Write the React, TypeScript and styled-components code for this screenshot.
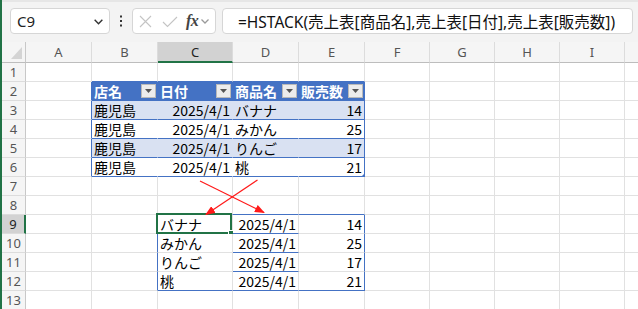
import React from "react";
import styled, { createGlobalStyle, css } from "styled-components";

const GlobalStyle = createGlobalStyle`
  html, body {
    margin: 0;
    padding: 0;
    background: #ffffff;
  }
  body {
    font-family: "Noto Sans CJK JP", "Noto Sans", sans-serif;
  }
`;

const GREEN = "#217346";
const BLUE = "#4472c4";
const GRID = "#e1e1e1";
const BAND = "#d9e1f2";

const Sheet = styled.div`
  position: relative;
  width: 638px;
  height: 309px;
  overflow: hidden;
  border-left: 2px solid ${GREEN};
  box-sizing: border-box;
  display: flex;
  flex-direction: column;
`;

const FormulaBar = styled.div`
  height: 42px;
  flex: none;
  box-sizing: border-box;
  background: #f3f3f3;
  border-top: 2px solid #e6e6e6;
  padding: 6px 5px 0 8px;
  display: flex;
  align-items: flex-start;
`;

const Box = styled.div<{ $width?: number; $grow?: boolean }>`
  height: 26px;
  box-sizing: border-box;
  background: #ffffff;
  border: 1px solid #d6d6d6;
  border-radius: 4px;
  display: flex;
  align-items: center;
  ${(p) => (p.$grow ? css`flex: 1; margin-left: 6px;` : css`width: ${p.$width}px; flex: none;`)}
`;

const NameText = styled.span`
  font-family: "Noto Sans", sans-serif;
  font-size: 15px;
  color: #222;
  padding-left: 6px;
  flex: 1;
`;

const IconSlot = styled.span<{ $gap?: number }>`
  display: flex;
  margin-left: ${(p) => p.$gap || 0}px;
  margin-right: ${(p) => (p.$gap ? 0 : 5)}px;
`;

const Dots = styled.div`
  width: 22px;
  height: 26px;
  display: flex;
  align-items: center;
  justify-content: center;
  flex: none;
`;

const FxGroup = styled.div`
  display: flex;
  align-items: center;
  padding-left: 6px;
`;

const FxText = styled.span`
  font-family: "Liberation Serif", serif;
  font-style: italic;
  font-weight: bold;
  font-size: 16px;
  color: #444;
  margin-left: 8px;
  letter-spacing: -0.5px;
`;

const Formula = styled.span`
  font-family: "Noto Sans", "Noto Sans CJK JP", sans-serif;
  font-size: 15.5px;
  color: #111;
  padding-left: 15px;
  white-space: nowrap;
`;

const Grid = styled.div`
  display: grid;
  grid-template-columns: 24px 66px 66px 75px 66px 66px 65px 65px 65px 65px 40px;
  grid-template-rows: 21px repeat(13, 19px);
`;

const Corner = styled.div`
  background: #f5f5f5;
  border-right: 1px solid #c8c8c8;
  border-bottom: 1px solid #bdbdbd;
  box-sizing: border-box;
  display: flex;
  align-items: flex-end;
  justify-content: flex-end;
  padding: 0 3px 3px 0;
`;

const ColHead = styled.div<{ $active?: boolean }>`
  box-sizing: border-box;
  background: ${(p) => (p.$active ? "#d2d2d2" : "#f5f5f5")};
  border-right: 1px solid #dcdcdc;
  border-bottom: ${(p) => (p.$active ? `2px solid ${GREEN}` : "1px solid #bdbdbd")};
  font-family: "Noto Sans", sans-serif;
  font-size: 13px;
  color: ${(p) => (p.$active ? "#222" : "#555")};
  display: flex;
  align-items: center;
  justify-content: center;
  overflow: hidden;
`;

const RowHead = styled.div<{ $active?: boolean }>`
  box-sizing: border-box;
  background: ${(p) => (p.$active ? "#d2d2d2" : "#f5f5f5")};
  border-right: ${(p) => (p.$active ? `2px solid ${GREEN}` : "1px solid #c8c8c8")};
  border-bottom: 1px solid #dcdcdc;
  font-family: "Noto Sans", sans-serif;
  font-size: 13px;
  color: ${(p) => (p.$active ? "#222" : "#555")};
  display: flex;
  align-items: center;
  justify-content: center;
`;

type CellProps = {
  $bg?: string;
  $right?: string;
  $bottom?: string;
  $align?: "left" | "right";
  $head?: boolean;
  $corner?: boolean;
};

const Cell = styled.div<CellProps>`
  position: relative;
  box-sizing: border-box;
  background: ${(p) => p.$bg || "#ffffff"};
  border-right: 1px solid ${(p) => p.$right || GRID};
  border-bottom: 1px solid ${(p) => p.$bottom || GRID};
  font-size: 14px;
  line-height: 18px;
  color: ${(p) => (p.$head ? "#ffffff" : "#000000")};
  font-weight: ${(p) => (p.$head ? 700 : 400)};
  padding: 0 2px;
  white-space: nowrap;
  display: flex;
  align-items: center;
  justify-content: ${(p) => (p.$align === "right" ? "flex-end" : "space-between")};
  ${(p) =>
    p.$corner &&
    css`
      &::after {
        content: "";
        position: absolute;
        right: -1px;
        bottom: -1px;
        border-left: 4px solid transparent;
        border-bottom: 4px solid ${BLUE};
      }
    `}
`;

const FilterButton = styled.span`
  width: 15px;
  height: 14px;
  box-sizing: border-box;
  background: #ececec;
  border: 1px solid #b9b9b9;
  display: flex;
  align-items: center;
  justify-content: center;
  margin-right: -1px;
  flex: none;
`;

const Selection = styled.div`
  position: absolute;
  left: -2px;
  top: -2px;
  width: 76px;
  height: 21px;
  box-sizing: border-box;
  border: 2px solid ${GREEN};
  pointer-events: none;
`;

const FillHandle = styled.div`
  position: absolute;
  left: 70px;
  top: 15px;
  width: 7px;
  height: 7px;
  box-sizing: border-box;
  background: ${GREEN};
  border: 1px solid #ffffff;
`;

const Overlay = styled.svg`
  position: absolute;
  left: -2px;
  top: 0;
  pointer-events: none;
`;

const Chevron = ({ color, size }: { color: string; size: number }) => (
  <svg width={size} height={size} viewBox="0 0 10 10">
    <path d="M1.5 3.5 L5 7 L8.5 3.5" fill="none" stroke={color} strokeWidth="1.3" />
  </svg>
);

// J is only partly on screen, its letter falls past the edge
const columns = ["A", "B", "C", "D", "E", "F", "G", "H", "I", ""];

const source: string[][] = [
  ["鹿児島", "2025/4/1", "バナナ", "14"],
  ["鹿児島", "2025/4/1", "みかん", "25"],
  ["鹿児島", "2025/4/1", "りんご", "17"],
  ["鹿児島", "2025/4/1", "桃", "21"],
];

const spill: string[][] = [
  ["バナナ", "2025/4/1", "14"],
  ["みかん", "2025/4/1", "25"],
  ["りんご", "2025/4/1", "17"],
  ["桃", "2025/4/1", "21"],
];

const tableHeads = ["店名", "日付", "商品名", "販売数"];

// c: 0 = A ... 9 = J
function cellFor(r: number, c: number) {
  const props: CellProps = {};
  let text = "";
  let filter = false;

  // source table B2:E6
  if (c === 0 && r >= 2 && r <= 6) props.$right = BLUE;
  if (r === 1 && c >= 1 && c <= 4) props.$bottom = BLUE;
  if (r >= 2 && r <= 6 && c >= 1 && c <= 4) {
    props.$bottom = BLUE;
    props.$right = c === 4 ? BLUE : r === 2 ? BLUE : r % 2 === 1 ? BAND : "#ffffff";
    if (r === 2) {
      props.$bg = BLUE;
      props.$head = true;
      text = tableHeads[c - 1];
      filter = true;
    } else {
      props.$bg = r % 2 === 1 ? BAND : "#ffffff";
      text = source[r - 3][c - 1];
      if (c === 2 || c === 4) props.$align = "right";
      if (r === 6 && c === 4) props.$corner = true;
    }
  }

  // spilled range C9:E12
  if (c === 1 && r >= 9 && r <= 12) props.$right = BLUE;
  if (r === 8 && c >= 2 && c <= 4) props.$bottom = BLUE;
  if (r >= 9 && r <= 12 && c >= 2 && c <= 4) {
    text = spill[r - 9][c - 2];
    if (c >= 3) props.$align = "right";
    if (c === 4) props.$right = BLUE;
    if (r === 12 || (c === 3 && r <= 11)) props.$bottom = BLUE;
  }

  return { props, text, filter };
}

const App = () => {
  const rows = Array.from({ length: 13 }, (_, i) => i + 1);

  return (
    <Sheet>
      <GlobalStyle />
      <FormulaBar>
        <Box $width={100}>
          <NameText>C9</NameText>
          <IconSlot>
            <Chevron color="#333" size={11} />
          </IconSlot>
        </Box>
        <Dots>
          <svg width="4" height="12" viewBox="0 0 4 12">
            <rect x="1" y="0.5" width="2" height="2" fill="#333" />
            <rect x="1" y="5" width="2" height="2" fill="#333" />
            <rect x="1" y="9.5" width="2" height="2" fill="#333" />
          </svg>
        </Dots>
        <Box $width={84}>
          <FxGroup>
            <svg width="13" height="13" viewBox="0 0 13 13">
              <path d="M1 1 L12 12 M12 1 L1 12" stroke="#c4c4c4" strokeWidth="1.1" />
            </svg>
            <IconSlot $gap={10}>
              <svg width="16" height="13" viewBox="0 0 16 13">
                <path d="M1 7 L5.5 11.5 L15 2" fill="none" stroke="#c4c4c4" strokeWidth="1.1" />
              </svg>
            </IconSlot>
            <FxText>fx</FxText>
            <IconSlot $gap={2}>
              <Chevron color="#9a9a9a" size={10} />
            </IconSlot>
          </FxGroup>
        </Box>
        <Box $grow>
          <Formula>=HSTACK(売上表[商品名],売上表[日付],売上表[販売数])</Formula>
        </Box>
      </FormulaBar>

      <Grid>
        <Corner>
          <svg width="11" height="12" viewBox="0 0 11 12">
            <path d="M11 0 L11 12 L0 12 Z" fill="#d4d4d4" />
          </svg>
        </Corner>
        {columns.map((col, i) => (
          <ColHead key={i} $active={col === "C"}>
            {col}
          </ColHead>
        ))}
        {rows.map((r) => (
          <React.Fragment key={r}>
            <RowHead $active={r === 9}>{r}</RowHead>
            {columns.map((_, c) => {
              const { props, text, filter } = cellFor(r, c);
              return (
                <Cell key={c} {...props}>
                  {text && <span>{text}</span>}
                  {filter && (
                    <FilterButton>
                      <svg width="7" height="4" viewBox="0 0 7 4">
                        <path d="M0 0 L7 0 L3.5 4 Z" fill="#555" />
                      </svg>
                    </FilterButton>
                  )}
                  {r === 9 && c === 2 && (
                    <Selection>
                      <FillHandle />
                    </Selection>
                  )}
                </Cell>
              );
            })}
          </React.Fragment>
        ))}
      </Grid>

      <Overlay width="638" height="309" viewBox="0 0 638 309">
        <defs>
          <marker id="head" markerWidth="10" markerHeight="8" refX="9" refY="4" orient="auto" markerUnits="userSpaceOnUse">
            <path d="M0 0 L10 4 L0 8 Z" fill="#ff1a1a" />
          </marker>
        </defs>
        <line x1="200" y1="181" x2="264" y2="212.5" stroke="#ff1a1a" strokeWidth="1.2" markerEnd="url(#head)" />
        <line x1="257.5" y1="180" x2="206" y2="214.5" stroke="#ff1a1a" strokeWidth="1.2" markerEnd="url(#head)" />
      </Overlay>
    </Sheet>
  );
};

export default App;
